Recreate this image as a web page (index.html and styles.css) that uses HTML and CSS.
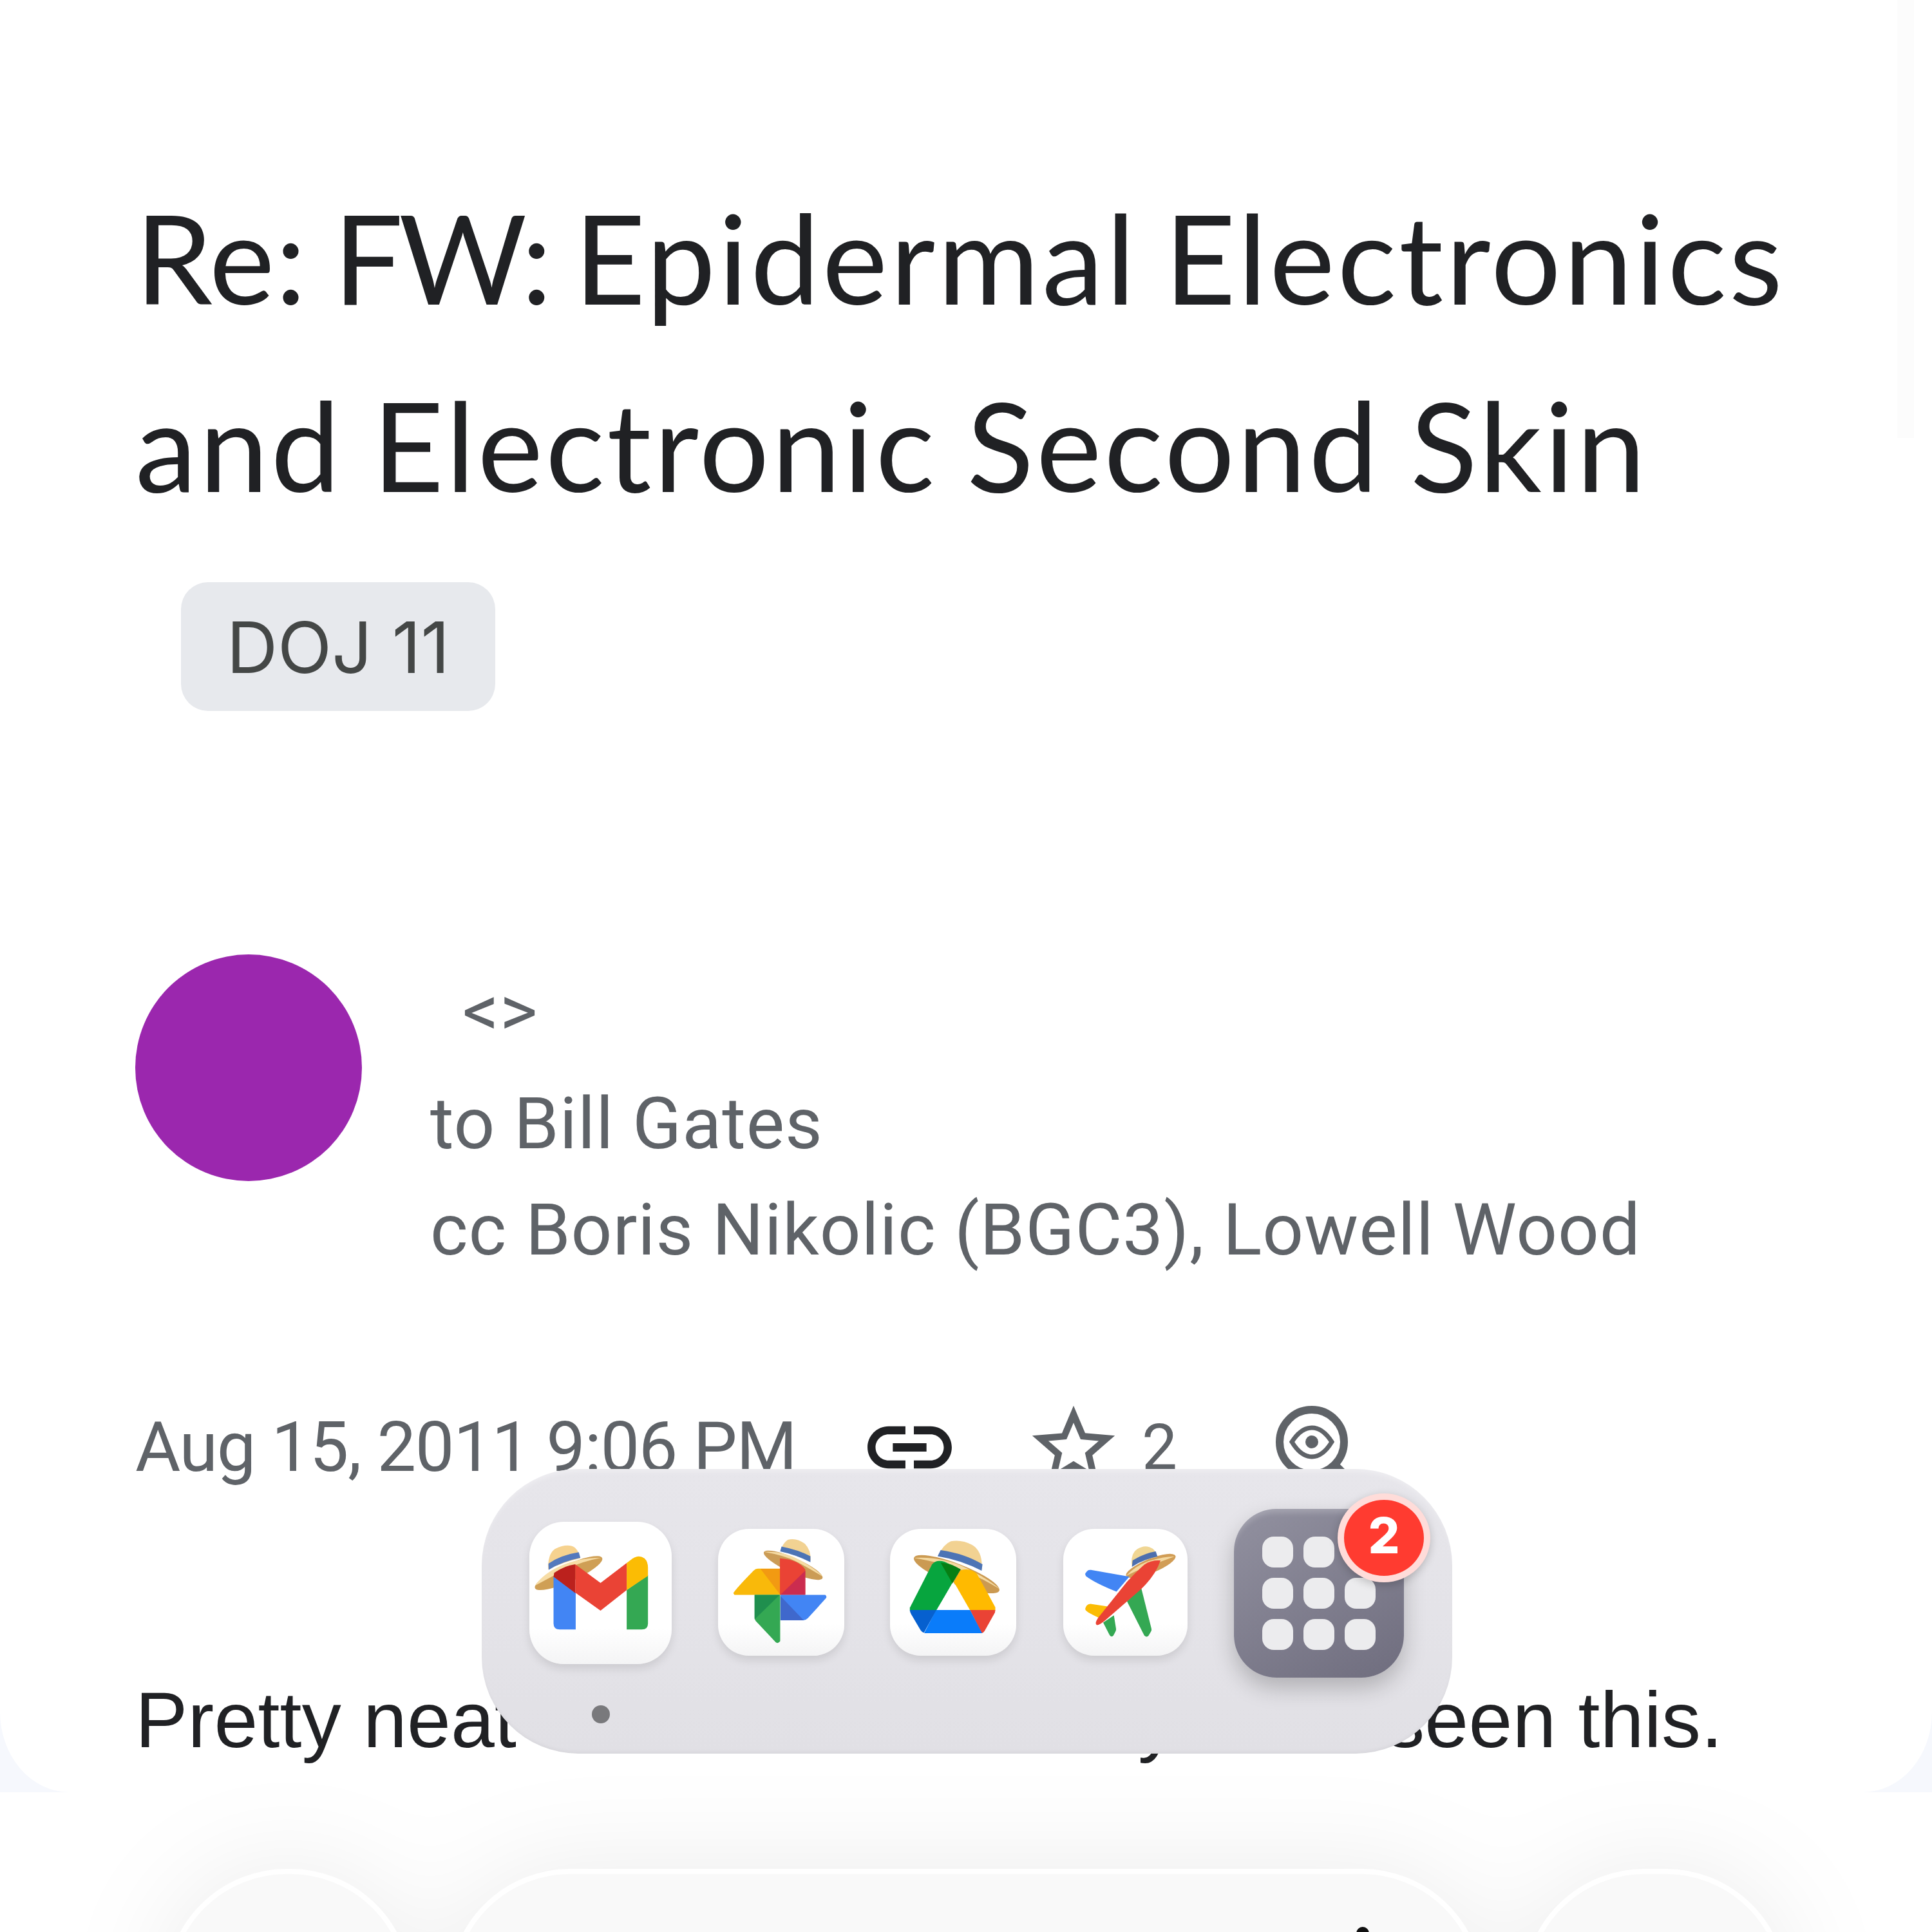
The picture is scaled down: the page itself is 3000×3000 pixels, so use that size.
FILE: index.html
```html
<!DOCTYPE html>
<html lang="en">
<head>
  <meta charset="UTF-8">
  <title>Re: FW: Epidermal Electronics and Electronic Second Skin</title>
  <link rel="stylesheet" href="styles.css">
</head>
<body>
  <main class="mail">
    <h1 class="subject">
      <span class="subject-line first"><span class="re">Re:</span> <span class="tight">FW:</span> Epidermal Electronics</span>
      <span class="subject-line second">and Electronic Second Skin</span>
    </h1>
    <span class="label">DOJ 11</span>

    <section class="sender">
      <div class="avatar"></div>
      <div class="people">
        <p class="address">&lt;&gt;</p>
        <p class="to">to Bill Gates</p>
        <p class="cc">cc Boris Nikolic (BGC3), Lowell Wood</p>
      </div>
    </section>

    <div class="meta">
      <span class="date">Aug 15, 2011 9:06 PM</span>
      <svg class="icon-link" viewBox="0 0 24 24"><path fill="#202124" d="M3.9 12c0-1.71 1.39-3.1 3.1-3.1h4V7H7c-2.76 0-5 2.24-5 5s2.24 5 5 5h4v-1.9H7c-1.71 0-3.1-1.39-3.1-3.1zM8 13h8v-2H8v2zm9-6h-4v1.9h4c1.71 0 3.1 1.39 3.1 3.1s-1.39 3.1-3.1 3.1h-4V17h4c2.76 0 5-2.24 5-5s-2.24-5-5-5z"/></svg>
      <svg class="icon-star" viewBox="0 0 24 24"><path fill="#5f6368" d="M22 9.24l-7.19-.62L12 2 9.19 8.63 2 9.24l5.46 4.73L5.82 21 12 17.27 18.18 21l-1.63-7.03L22 9.24zM12 15.4l-3.76 2.27 1-4.28-3.32-2.88 4.38-.38L12 6.1l1.71 4.04 4.38.38-3.32 2.88 1 4.28L12 15.4z"/></svg>
      <span class="stars">2</span>
      <svg class="icon-eye" viewBox="0 0 130 154" fill="none" stroke="#5f6368">
        <circle cx="65" cy="69" r="50" stroke-width="12"/>
        <path d="M98 103l22 22" stroke-width="14"/>
        <path d="M34 69Q48 47 65 47T96 69Q82 92 65 92T34 69z" stroke-width="7"/>
        <circle cx="65" cy="69" r="10" fill="#5f6368" stroke="none"/>
      </svg>
    </div>

    <p class="message"><span class="lead">Pretty neat</span><span class="tail">you've seen this.</span></p>
    <div class="scrollbar"></div>
  </main>

  <nav class="browser-bar">
    <div class="round back"></div>
    <div class="address-bar"></div>
    <div class="round more"></div>
    <span class="share-tip"></span>
  </nav>

  <div class="dock">
    <!-- Gmail -->
    <div class="app gmail">
      <svg viewBox="63 70 642 663" preserveAspectRatio="none">
        <ellipse cx="240" cy="309" rx="167" ry="40" fill="#cf9f55" transform="rotate(-25 240 309)"/>
        <path fill="#f7dda6" d="M88 368Q125 312 205 275T385 238Q300 255 235 288T88 368z"/>
        <path fill="#f6d28f" d="M148 292Q145 222 178 197Q235 168 268 190Q288 210 292 240Q215 258 148 292z"/>
        <path fill="#5479bd" d="M149 265Q205 225 286 212L293 238Q210 255 150 294z"/>
        <path fill="#4285f4" d="M172 325l100 75v172h-72q-28 0-28-28z"/>
        <path fill="#34a853" d="M502 388l96-70v226q0 28-28 28h-68z"/>
        <path fill="#fbbc04" d="M502 388V262l26-20Q556 221 582 240Q598 255 598 284v38z"/>
        <path fill="#ea4335" d="M270 268l114 87 118-93v126l-118 96-114-84z"/>
        <path fill="#bb211d" d="M175 308Q220 275 270 268v134l-98-76z"/>
      </svg>
    </div>
    <!-- Photos -->
    <div class="app photos">
      <svg viewBox="917 103 563 590" preserveAspectRatio="none">
        <ellipse cx="1252" cy="272" rx="144" ry="34" fill="#cb9c56" transform="rotate(25 1252 272)"/>
        <path fill="#f5dba3" d="M1122 210Q1210 205 1285 250T1384 325Q1310 278 1260 252T1122 210z"/>
        <path fill="#f2d292" d="M1196 205Q1205 170 1228 154Q1265 142 1304 172Q1332 202 1330 250Q1270 225 1196 205z"/>
        <path fill="#4d74b5" d="M1200 185Q1275 200 1329 230V258Q1265 224 1194 208z"/>
        <path fill="#f9b90a" d="M985 402Q1000 378 1075 298Q1084 288 1096 288h99v122H990z"/>
        <path fill="#f29a12" d="M1106 289h89v121z"/>
        <path fill="#ea4335" d="M1193 240Q1275 245 1306 292v118h-113z"/>
        <path fill="#cb2c4f" d="M1195 410l111-112v112z"/>
        <path fill="#4285f4" d="M1195 410h200q9 8 3 16l-80 92q-9 10-20 10h-103z"/>
        <path fill="#3f68cc" d="M1195 415l104 113h-104z"/>
        <path fill="#34a853" d="M1080 410h114v215q-8 14-20 5l-83-92q-11-11-11-22z"/>
        <path fill="#1f8f4e" d="M1080 410h112l-112 114z"/>
      </svg>
    </div>
    <!-- Drive -->
    <div class="app drive">
      <svg viewBox="65 103 591 590" preserveAspectRatio="none">
        <ellipse cx="377" cy="314" rx="214" ry="48" fill="#cb9a52" transform="rotate(21 377 314)"/>
        <path fill="#f4d9a0" d="M176 238Q310 230 420 284T580 384Q470 318 390 290T176 238z"/>
        <path fill="#f2d292" d="M290 228Q315 175 350 161Q400 152 450 178Q500 208 495 292Q400 245 290 228z"/>
        <path fill="#4d74b5" d="M302 202Q415 218 498 268L494 298Q400 248 288 230z"/>
        <path fill="#07a53e" d="M262 268Q282 244 320 256L394 290 282 484H158V470z"/>
        <path fill="#077f14" d="M302 260Q350 262 396 292L357 356z"/>
        <path fill="#fff" d="M362 350l76 132H282z"/>
        <path fill="#ffba00" d="M395 296Q440 282 472 312L558 468V482H440L364 350z"/>
        <path fill="#ea4335" d="M440 480h118q0 12-6 20l-44 78q-6 10-14 10z"/>
        <path fill="#0a7cfa" d="M280 480h160l56 108H225z"/>
        <path fill="#0660cf" d="M158 480h124l-58 106q-10-2-16-12l-44-74q-6-10-6-20z"/>
      </svg>
    </div>
    <!-- Flights -->
    <div class="app flights">
      <svg viewBox="872 103 579 590" preserveAspectRatio="none">
        <ellipse cx="1280" cy="275" rx="124" ry="33" fill="#d19d56" transform="rotate(-22 1280 275)"/>
        <path fill="#f4d9a0" d="M1165 322Q1210 270 1280 250T1390 232Q1310 262 1260 280T1165 322z"/>
        <path fill="#f0d694" d="M1190 260Q1190 215 1215 198Q1255 172 1290 196Q1305 210 1308 235Q1245 245 1192 275z"/>
        <path fill="#4d6fae" d="M1195 250Q1245 218 1303 208L1311 232Q1245 245 1192 280z"/>
        <path fill="#4285f4" d="M975 310l10-12q6-5 16-4l179 31-60 70q-100-40-142-72-6-6-3-13z"/>
        <path fill="#fbbc04" d="M975 472q6-20 24-20l80 12-42 52q-50-22-60-34-4-4-2-10z"/>
        <path fill="#34a853" d="M1235 376l48 192q1 7-2 12l-12 20q-10 10-20-2l-80-158z"/>
        <path fill="#34a853" d="M1108 505l10 62q1 7-2 12l-10 20q-9 10-18-2l-30-58z"/>
        <path fill="#ea4335" d="M1325 250Q1285 246 1252 268Q1225 290 1170 348L1036 515Q1015 545 1030 551Q1045 548 1066 530L1225 392Q1300 325 1325 250z"/>
      </svg>
    </div>
    <div class="launcher">
      <i></i><i></i><i></i>
      <i></i><i></i><i></i>
      <i></i><i></i><i></i>
      <span class="badge">2</span>
    </div>
    <span class="running"></span>
  </div>
</body>
</html>
```
FILE: styles.css
```css
:root {
  --text: #202124;
  --muted: #5f6368;
}
* {
  box-sizing: border-box;
  margin: 0;
  padding: 0;
}
body {
  position: relative;
  width: 3000px;
  height: 3000px;
  overflow: hidden;
  background: linear-gradient(#f6f8fd 2783px, #fff 2783px);
  color: var(--text);
  font-family: Roboto, sans-serif;
}
svg {
  display: block;
  flex: none;
}

/* message */
.mail {
  position: relative;
  height: 2783px;
  padding: 253px 0 0 210px;
  background: #fff;
  border-radius: 0 0 108px 108px / 0 0 125px 125px;
}
.subject {
  font-family: Lato, sans-serif;
  font-size: 192px;
  font-weight: 400;
  line-height: 291px;
  letter-spacing: 4px;
  white-space: nowrap;
}
.subject-line {
  display: block;
}
.first {
  word-spacing: -12px;
}
.second {
  word-spacing: -7px;
}
.re {
  letter-spacing: 1px;
}
.tight {
  letter-spacing: -7px;
}
.label {
  display: block;
  width: 488px;
  height: 200px;
  margin: 69px 0 0 71px;
  border-radius: 42px;
  background: #e7e9ed;
  color: #444746;
  font-family: Inter, sans-serif;
  font-size: 110px;
  line-height: 202px;
  text-align: center;
}
.sender {
  display: flex;
  gap: 106px;
  margin-top: 378px;
}
.avatar {
  width: 352px;
  height: 352px;
  border-radius: 50%;
  background: #9b27ae;
}
.people {
  padding-top: 5px;
  color: var(--muted);
  font-size: 112px;
  line-height: 165px;
  letter-spacing: .95px;
  white-space: nowrap;
}
.address {
  margin-bottom: 10px;
  padding-left: 50px;
}
.meta {
  display: flex;
  align-items: center;
  height: 154px;
  margin-top: 178px;
  color: var(--muted);
}
.date {
  width: 1124px;
  font-size: 108px;
  letter-spacing: -1.35px;
  white-space: nowrap;
}
.icon-link {
  width: 157px;
  height: 157px;
  margin-right: 99px;
}
.icon-star {
  width: 154px;
  height: 154px;
}
.stars {
  width: 228px;
  padding-left: 29px;
  font-size: 98px;
}
.icon-eye {
  width: 130px;
  height: 154px;
}
.message {
  display: flex;
  margin-top: 262px;
  font-family: "Liberation Sans", sans-serif;
  font-size: 122px;
  line-height: 170px;
  letter-spacing: .2px;
  white-space: nowrap;
}
.lead {
  width: 1557px;
}
.scrollbar {
  position: absolute;
  top: 0;
  right: 28px;
  width: 26px;
  height: 680px;
  background: #fcfcfc;
}

/* browser toolbar, runs off the bottom edge */
.browser-bar {
  position: absolute;
  top: 2902px;
  left: 257px;
  display: flex;
  filter: drop-shadow(0 0 80px rgba(0, 0, 0, .08));
}
.round,
.address-bar {
  height: 376px;
  border: 8px solid #fff;
  border-radius: 188px;
  background: #f9f9f9;
}
.back {
  width: 382px;
}
.address-bar {
  width: 1606px;
  margin: 0 62px 0 58px;
}
.more {
  width: 410px;
}
.share-tip {
  position: absolute;
  top: 90px;
  left: 1849px;
  width: 20px;
  height: 20px;
  border-radius: 50%;
  background: #111;
}

/* dock */
.dock {
  position: absolute;
  top: 2281px;
  left: 748px;
  display: flex;
  width: 1507px;
  height: 442px;
  padding-left: 74px;
  border-radius: 150px;
  background: linear-gradient(#e7e6eb, #e1e0e5);
  box-shadow: inset 0 8px 8px -4px rgba(255, 255, 255, .35), inset 0 -5px 6px -3px rgba(0, 0, 0, .05);
}
.app {
  width: 196px;
  height: 197px;
  margin-top: 93px;
  border-radius: 48px;
  overflow: hidden;
  background: linear-gradient(#fff 75%, #f4f4f5);
  box-shadow: 0 7px 14px rgba(0, 0, 0, .1);
}
.app svg {
  width: 100%;
  height: 100%;
}
.gmail {
  width: 221px;
  height: 221px;
  margin: 82px 72px 0 0;
  border-radius: 54px;
}
.photos {
  margin-right: 71px;
}
.drive {
  margin-right: 73px;
}
.flights {
  width: 193px;
  margin-right: 72px;
}
.launcher {
  position: relative;
  display: grid;
  grid-template-columns: repeat(3, 48px);
  grid-auto-rows: 48px;
  gap: 16px;
  width: 264px;
  height: 262px;
  margin-top: 62px;
  padding: 43px 0 0 44px;
  border-radius: 66px;
  background: linear-gradient(150deg, #9291a0, #6f6d7e);
  box-shadow: inset 0 10px 8px -4px rgba(255, 255, 255, .2), 0 16px 34px rgba(0, 0, 0, .22);
}
.launcher i {
  border-radius: 18px;
  background: #ececee;
}
.badge {
  position: absolute;
  top: -24px;
  left: 161px;
  width: 144px;
  height: 138px;
  border: 10px solid #ffdcd9;
  border-radius: 50%;
  background: #ff3b30;
  box-shadow: 0 4px 14px rgba(0, 0, 0, .2);
  color: #fff;
  font: 800 77px/110px Inter, sans-serif;
  text-align: center;
}
.running {
  position: absolute;
  top: 367px;
  left: 171px;
  width: 28px;
  height: 28px;
  border-radius: 50%;
  background: #79797c;
}
```
